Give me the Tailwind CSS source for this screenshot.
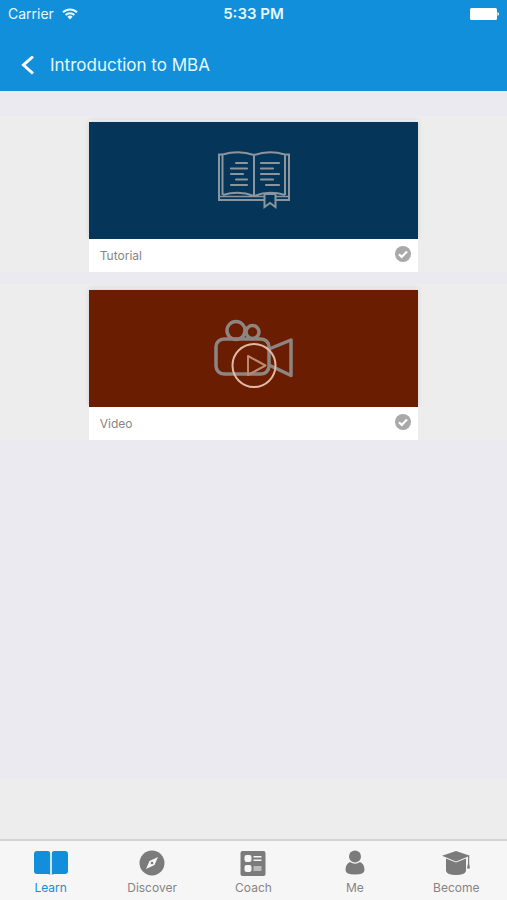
<!DOCTYPE html>
<html lang="en">
<head>
<meta charset="utf-8">
<meta name="viewport" content="width=device-width, initial-scale=1">
<title>Introduction to MBA</title>
<script src="https://cdn.jsdelivr.net/npm/@tailwindcss/browser@4"></script>
</head>
<body class="flex min-h-screen flex-col bg-[#ebeaf0] font-['Inter','Liberation_Sans',sans-serif]">
<header class="bg-[#128fdb] text-[#e6f8ff]">
  <div class="grid h-7 grid-cols-3 items-center px-2">
    <div class="flex items-center gap-2 text-sm">
      <span>Carrier</span>
      <svg class="h-3 w-4" viewBox="0 0 16 12" fill="none" stroke="currentColor" stroke-width="2" aria-hidden="true">
        <path d="M1 4.300a10 10 0 0 1 14 0M3.600 7a6.300 6.300 0 0 1 8.800 0"/><path d="M5.400 8.800a3.700 3.700 0 0 1 5.200 0L8 11.600z" fill="currentColor" stroke="none"/>
      </svg>
    </div>
    <div class="text-center text-[15px] font-semibold whitespace-nowrap">5:33 PM</div>
    <svg class="h-3 w-[30px] justify-self-end" viewBox="0 0 30 12" fill="#fff" aria-label="Battery full" role="img">
      <rect x="1" width="27" height="12" rx="1.500"/><path d="M28.500 4q1.500 .5 1.500 2t-1.500 2z"/>
    </svg>
  </div>
  <div class="flex h-[63px] items-center gap-[14px] pt-3 pl-5">
    <button type="button" aria-label="Back" class="flex h-8 w-4 items-center text-white">
      <svg class="h-5 w-4" viewBox="0 0 16 20" fill="none" stroke="currentColor" stroke-width="3"><path d="M13 .5 3.500 9l9.500 8.500"/></svg>
    </button>
    <h1 class="text-[17px]">Introduction to MBA</h1>
  </div>
</header>
<main class="flex flex-1 flex-col gap-3 pt-[25px]">
  <section class="bg-[#ededed] pt-1">
    <a href="#tutorial" class="mx-auto block w-[65%] max-w-lg border-t-2 border-[#f6f6fa]">
      <div class="flex h-[117px] items-center justify-center bg-[#053559] shadow-[0_-1px_5px_rgba(0,0,0,0.12)]">
        <svg class="h-[60px] w-[74px]" viewBox="-1 1 74 60" fill="none" stroke="#8b959b" stroke-width="2" aria-hidden="true">
          <path d="M5 4.500H2V50h46M58 50h14V4.500h-3"/>
          <path d="M3 46.500h45M58 46.500h13" stroke-width="1.500"/>
          <path d="M5.500 45V4.500Q22 0 37 5q15-5 31 -.5V45M37 5v41M6 45q16-5 31 1q15-6 31-1"/>
          <path d="M47.500 44v13l5.500-4 5.500 4V44z" fill="#053559" stroke-width="2"/>
          <g stroke-linecap="round" stroke-width="2.200"><path d="M19 13h11M14 18.500h16M14 24h12M19 29.500h11M14 35h16M44 13h18M44 18.500h12M44 24h18M44 29.500h12M49 35h13"/></g>
        </svg>
      </div>
      <div class="flex h-[33px] items-center justify-between bg-white pr-[7px] pl-[11px]">
        <span class="text-xs text-[#858585]">Tutorial</span>
        <svg class="mb-1 h-4 w-4" viewBox="0 0 16 16" aria-label="Completed" role="img"><circle cx="8" cy="8" r="8" fill="#a9a9a9"/><path d="m4 8.300 2.700 2.600L12 5.400" fill="none" stroke="#fff" stroke-width="2.200"/></svg>
      </div>
    </a>
  </section>
  <section class="bg-[#ededed] pt-1">
    <a href="#video" class="mx-auto block w-[65%] max-w-lg border-t-2 border-[#f1f1f1]">
      <div class="flex h-[117px] items-center justify-center bg-[#6a1d00] shadow-[0_-1px_5px_rgba(0,0,0,0.12)]">
        <svg class="h-20 w-20" viewBox="-1 0 80 80" fill="none" aria-hidden="true">
          <g stroke="#8c8582" stroke-width="3.500" stroke-linejoin="round">
            <circle cx="22" cy="21.500" r="9"/><circle cx="38.500" cy="23" r="6.500"/>
            <rect x="2" y="30" width="53" height="35" rx="8"/>
            <path d="M55 40 77 31V66.500L55 56"/>
          </g>
          <circle cx="40" cy="56.500" r="21.500" stroke="#dfb9a5" stroke-width="2"/>
          <path d="M34 47v19L51.500 56.500z" stroke="#b98b75" stroke-width="2" stroke-linejoin="round"/>
        </svg>
      </div>
      <div class="flex h-[33px] items-center justify-between bg-white pr-[7px] pl-[11px]">
        <span class="text-xs text-[#858585]">Video</span>
        <svg class="mb-1 h-4 w-4" viewBox="0 0 16 16" aria-label="Completed" role="img"><circle cx="8" cy="8" r="8" fill="#a9a9a9"/><path d="m4 8.300 2.700 2.600L12 5.400" fill="none" stroke="#fff" stroke-width="2.200"/></svg>
      </div>
    </a>
  </section>
</main>
<div class="h-[60px] bg-[#ededed]"></div>
<nav class="grid h-[61px] grid-cols-5 border-t-2 border-[#d4d4d4] bg-[#f6f6f6] pt-2 text-xs text-[#858585]" aria-label="Main">
  <a href="#learn" aria-current="page" class="flex flex-col items-center gap-1 text-[#128fdb]">
    <svg class="h-[27px] w-[34px]" viewBox="0 0 34 27" fill="currentColor" aria-hidden="true"><path d="M3 2h11q2 0 2 1.500v22q-1-.5-3-.5H3q-3 0-3-3V5q0-3 3-3zM20 2h11q3 0 3 3v17q0 3-3 3H21q-2 0-3 .5v-22Q18 2 20 2z"/><path d="M16.500 4h1v22h-1z" opacity=".35"/></svg>
    <span>Learn</span>
  </a>
  <a href="#discover" class="flex flex-col items-center gap-1">
    <svg class="h-[27px] w-[26px]" viewBox="0 0 26 27" aria-hidden="true"><circle cx="13" cy="14" r="12.500" fill="#7b7b7b"/><path d="M19 8 15.500 16 7 20 10.500 12z" fill="#f6f6f6"/><circle cx="13" cy="14" r="1.300" fill="#7b7b7b"/></svg>
    <span>Discover</span>
  </a>
  <a href="#coach" class="flex flex-col items-center gap-1">
    <svg class="h-[27px] w-[26px]" viewBox="0 0 26 27" aria-hidden="true"><rect x=".5" y="2" width="25" height="25" rx="2" fill="#7b7b7b"/><g fill="#f6f6f6"><rect x="4.500" y="6" width="7" height="7" rx="2"/><rect x="4.500" y="16" width="7" height="7" rx="2"/><path d="M13.500 7h8v1.500h-8zM13.500 10.500h8V12h-8z"/></g><path d="M13.500 17h8v5h-8z" fill="#bbb"/></svg>
    <span>Coach</span>
  </a>
  <a href="#me" class="flex flex-col items-center gap-1">
    <svg class="h-[27px] w-5" viewBox="0 0 20 27" fill="#7b7b7b" aria-hidden="true"><circle cx="10" cy="7.500" r="6"/><path d="M5 13q5 3.500 10 0q4.500 2 4.500 8 0 4.500-9.500 4.500T.5 21q0-6 4.500-8z"/></svg>
    <span>Me</span>
  </a>
  <a href="#become" class="flex flex-col items-center gap-1">
    <svg class="h-[27px] w-7" viewBox="0 0 28 27" fill="#7b7b7b" aria-hidden="true"><path d="M14 2 28 6.800 14 12.500 0 6.800z"/><path d="M4 9.500 14 13.500 24 9.500V22q-1 4-10 4T4 22z"/><path d="M26 7h1.200v7.500l.8 5h-3l1-5z"/></svg>
    <span>Become</span>
  </a>
</nav>
</body>
</html>
